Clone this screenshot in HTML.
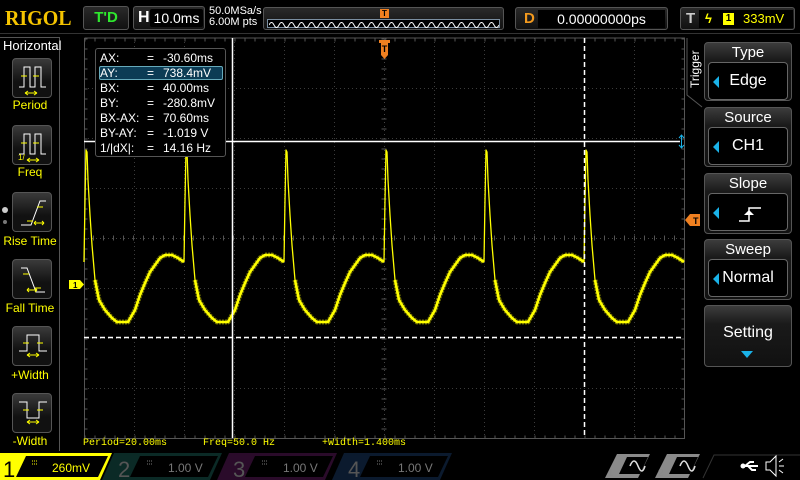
<!DOCTYPE html>
<html><head><meta charset="utf-8"><style>
*{margin:0;padding:0;box-sizing:border-box}
body{width:800px;height:480px;background:#000;overflow:hidden;position:relative;font-family:"Liberation Sans",sans-serif;color:#fff}
.a{position:absolute}
.btn{position:absolute;left:12px;width:40px;height:40px;border:1px solid #555;border-radius:4px;background:linear-gradient(#3a3a3a,#111 60%)}
.lbl{position:absolute;left:0;width:60px;text-align:center;color:#ff0;font-size:12px}
.mo{position:absolute;left:704px;width:88px;border:1px solid #555;border-radius:4px;background:linear-gradient(#3c3c3c,#1a1a1a 30%,#111)}
.mo .t{text-align:center;font-size:15px;color:#fff;height:19px;line-height:19px}
.mo .in{position:absolute;left:3px;right:3px;top:19px;height:38px;border:1px solid #666;border-radius:4px;background:#000;font-size:16px;text-align:center;line-height:36px}
.tri{position:absolute;left:4px;top:13px;width:0;height:0;border-top:6px solid transparent;border-bottom:6px solid transparent;border-right:6px solid #1ab2e8}
.box{position:absolute;border:1px solid #555;border-radius:3px;background:linear-gradient(#2a2a2a,#111)}
.m{position:absolute;top:438px;font-family:'Liberation Mono',monospace;font-size:10px;color:#ff0;white-space:pre}
</style></head><body>

<!-- top bar -->
<div class="a" style="left:5px;top:6px;font-family:'Liberation Serif',serif;font-weight:bold;font-size:21px;color:#f5c400;transform:scaleX(0.95);transform-origin:left">RIGOL</div>
<div class="box" style="left:83px;top:6px;width:46px;height:24px;text-align:center;line-height:22px;color:#2ee82e;font-weight:bold;font-size:15px">T'D</div>
<div class="box" style="left:133px;top:6px;width:72px;height:24px"><span class="a" style="left:4px;top:2px;font-weight:bold;font-size:16px">H</span><div class="a" style="left:16px;top:2px;width:53px;height:18px;background:#000;border-radius:2px;font-size:14px;text-align:center;line-height:18px">10.0ms</div></div>
<div class="a" style="left:209px;top:6px;font-size:11px;line-height:11px">50.0MSa/s<br>6.00M pts</div>
<div class="box" style="left:263px;top:7px;width:241px;height:23px"><div class="a" style="left:3px;top:11px;width:233px;height:9px;border:1px solid #7a8ea0;background:#000"></div>
<svg class="a" style="left:5px;top:12px" width="230" height="8"><path d="M0 5 q2.5 -5 5 0 t5 0 t5 0 t5 0 t5 0 t5 0 t5 0 t5 0 t5 0 t5 0 t5 0 t5 0 t5 0 t5 0 t5 0 t5 0 t5 0 t5 0 t5 0 t5 0 t5 0 t5 0 t5 0 t5 0 t5 0 t5 0 t5 0 t5 0 t5 0 t5 0 t5 0 t5 0 t5 0 t5 0 t5 0 t5 0 t5 0 t5 0 t5 0 t5 0 t5 0 t5 0 t5 0 t5 0 t5 0 t5 0" stroke="#fff" fill="none" stroke-width="1"/></svg>
<div class="a" style="left:116px;top:1px;width:9px;height:9px;background:#f08020;color:#000;font-size:8px;text-align:center;line-height:9px;font-weight:bold">T</div></div>
<div class="box" style="left:515px;top:7px;width:153px;height:23px"><span class="a" style="left:8px;top:2px;font-weight:bold;font-size:15px;color:#f39a1e">D</span><div class="a" style="left:22px;top:2px;width:127px;height:18px;background:#000;font-size:14px;text-align:center;line-height:18px">0.00000000ps</div></div>
<div class="box" style="left:680px;top:7px;width:115px;height:23px"><span class="a" style="left:5px;top:2px;font-weight:bold;font-size:15px;color:#ccc">T</span><div class="a" style="left:18px;top:2px;width:94px;height:18px;background:#000;font-size:13px;line-height:18px;color:#ff0"><span class="a" style="left:6px;top:0;font-weight:bold">&#x03DF;</span><span class="a" style="left:24px;top:3px;width:11px;height:12px;background:#ff0;color:#000;font-size:10px;line-height:12px;text-align:center;font-weight:bold">1</span><span class="a" style="left:44px;top:0">333mV</span></div></div>
<div class="a" style="left:0;top:33px;width:800px;height:1px;background:#333"></div>

<!-- left panel -->
<div class="a" style="left:0;top:37px;width:60px;height:414px;border-top:1px solid #555;border-right:1px solid #555"></div>
<div class="a" style="left:3px;top:38px;font-size:13px">Horizontal</div>
<div class="btn" style="top:58px"><svg width="40" height="40"><path d="M6 28h5V8h6v20h5V8h6v20h5" stroke="#fff" fill="none"/><path d="M8 17h6M20 17h6" stroke="#ff0"/><path d="M12 34h12M12 34l3-2M12 34l3 2M24 34l-3-2M24 34l-3 2" stroke="#ff0"/></svg></div>
<div class="lbl" style="top:98px">Period</div>
<div class="btn" style="top:125px"><svg width="40" height="40"><path d="M6 28h5V8h6v20h5V8h6v20h5" stroke="#fff" fill="none"/><path d="M8 17h6M20 17h6" stroke="#ff0"/><path d="M14 34h12M14 34l3-2M14 34l3 2M26 34l-3-2M26 34l-3 2" stroke="#ff0"/><text x="5" y="34" fill="#ff0" font-size="8">1/</text></svg></div>
<div class="lbl" style="top:165px">Freq</div>
<div class="a" style="left:2px;top:207px;width:6px;height:6px;border-radius:3px;background:#ccc"></div>
<div class="a" style="left:3px;top:220px;width:4px;height:4px;border-radius:2px;background:#777"></div>
<div class="btn" style="top:192px"><svg width="40" height="40"><path d="M8 32h10l9-24h6" stroke="#fff" fill="none"/><path d="M14 28h6M24 14h6M21 30h10M21 30l2-2M21 30l2 2M31 30l-2-2M31 30l-2 2" stroke="#ff0"/></svg></div>
<div class="lbl" style="top:234px;left:-2px;width:64px">Rise Time</div>
<div class="btn" style="top:259px"><svg width="40" height="40"><path d="M8 8h6l9 24h9" stroke="#fff" fill="none"/><path d="M10 14h6M22 28h6M14 30h10M14 30l2-2M14 30l2 2M24 30l-2-2M24 30l-2 2" stroke="#ff0"/></svg></div>
<div class="lbl" style="top:301px;left:-2px;width:64px">Fall Time</div>
<div class="btn" style="top:326px"><svg width="40" height="40"><path d="M6 24h8V8h12v16h8" stroke="#fff" fill="none"/><path d="M10 16h6M24 16h6M14 28h12M14 28l3-2M14 28l3 2M26 28l-3-2M26 28l-3 2" stroke="#ff0"/></svg></div>
<div class="lbl" style="top:368px">+Width</div>
<div class="btn" style="top:393px"><svg width="40" height="40"><path d="M6 8h8v16h12V8h8" stroke="#fff" fill="none"/><path d="M10 16h6M24 16h6M14 28h12M14 28l3-2M14 28l3 2M26 28l-3-2M26 28l-3 2" stroke="#ff0"/></svg></div>
<div class="lbl" style="top:434px">-Width</div>

<!-- grid & waveform -->
<svg class="a" style="left:0;top:0" width="800" height="480">
<g stroke="#3c3c3c" stroke-width="1" stroke-dasharray="1 3">
<path d="M134.5 38V438M184.5 38V438M234.5 38V438M284.5 38V438M334.5 38V438M434.5 38V438M484.5 38V438M534.5 38V438M584.5 38V438M634.5 38V438"/>
<path d="M84 88.5H684M84 138.5H684M84 188.5H684M84 288.5H684M84 338.5H684M84 388.5H684"/>
</g>
<g stroke="#555" stroke-width="1">
<path d="M84.5 38V438.5H684.5V38H84.5" fill="none"/>
<path d="M384.5 38V438M84 238.5H684" stroke-dasharray="1 3" stroke="#444"/>
</g>
<g stroke="#555" stroke-width="3" stroke-dasharray="1 9">
<path d="M84.5 40H684"/>
<path d="M84.5 437H684"/>
<path d="M384 238H684M384 238H84" stroke-width="5"/>
<path d="M86 38.5V438M683 38.5V438"/>
<path d="M384 38.5V438" stroke-width="5"/>
</g>
<!-- waveform -->
<defs>
<path id="p" d="M84 262 L85 200 L86 150 L87 152 L88 180 L90 215 L92 245 L95 280 L99 300 L105 310 L112 318 L117 322 L128 322 L135 310 L140 295 L145 283 L150 272 L155 265 L160 258 L165 255 L172 255 L178 258 L184 262" fill="none"/>
<path id="q" d="M95 280 L99 300 L105 310 L112 318 L117 322 L128 322 L135 310 L140 295 L145 283 L150 272 L155 265 L160 258 L165 255 L172 255 L178 258 L184 262" fill="none"/>
</defs>
<g stroke="#ff0" stroke-linejoin="round">
<g stroke-width="5" stroke="#6a6a00" stroke-dasharray="2 1"><use href="#q"/><use href="#q" x="100"/><use href="#q" x="200"/><use href="#q" x="300"/><use href="#q" x="400"/><use href="#q" x="500"/></g>
<g stroke-width="2.6"><use href="#q"/><use href="#q" x="100"/><use href="#q" x="200"/><use href="#q" x="300"/><use href="#q" x="400"/><use href="#q" x="500"/></g>
<g stroke-width="1.3"><use href="#p"/><use href="#p" x="100"/><use href="#p" x="200"/><use href="#p" x="300"/><use href="#p" x="400"/><use href="#p" x="500"/></g>
</g>
<!-- cursors -->
<path d="M232.5 38V438" stroke="#fff" stroke-width="1.5"/>
<path d="M584.5 38V438" stroke="#fff" stroke-width="1.5" stroke-dasharray="5 3"/>
<path d="M84 141.5H680" stroke="#fff" stroke-width="1.5"/>
<path d="M84 337.5H684" stroke="#fff" stroke-width="1.5" stroke-dasharray="5 3"/>
<path d="M681.5 135v13M679 138l2.5-3 2.5 3M679 145l2.5 3 2.5-3" stroke="#1ab2e8" fill="none"/>
<!-- markers -->
<path d="M379 40h11v3h-2v12l-3.5 4-3.5-4V43h-2z" fill="#f08020"/>
<text x="384.5" y="52" font-size="9" text-anchor="middle" fill="#000" font-weight="bold" font-family="Liberation Sans">T</text>
<path d="M700 214v12h-10l-5-6 5-6z" fill="#f08020"/>
<text x="693" y="224" font-size="9" fill="#000" font-weight="bold" font-family="Liberation Sans">T</text>
<path d="M69 280h11l4 4.5-4 4.5H69z" fill="#ff0"/>
<text x="73" y="288" font-size="8" fill="#000" font-weight="bold" font-family="Liberation Sans">1</text>
<!-- trigger tab -->
<path d="M687 38V95l15 12" stroke="#555" fill="none"/>
<text transform="translate(699,88) rotate(-90)" font-size="12" fill="#fff" font-family="Liberation Sans">Trigger</text>
<!-- bottom right icons -->
<path d="M605 478l12-24h33l-12 24z" fill="#8a8a8a"/><path d="M619 474l8-17h21l-8 17z" fill="#000"/>
<path d="M655 478l12-24h33l-12 24z" fill="#8a8a8a"/><path d="M669 474l8-17h21l-8 17z" fill="#000"/>
<path d="M630 466q4-10 8 0t7 0M680 466q4-10 8 0t7 0" stroke="#ddd" stroke-width="1.6" fill="none"/>
<text x="608" y="476" font-size="10" fill="#888" font-family="Liberation Sans">1</text>
<text x="658" y="476" font-size="10" fill="#888" font-family="Liberation Sans">2</text>
<path d="M703 478l11-23h86" stroke="#333" fill="none"/>
<path d="M742 466h16M745 466l5-4h4M748 466l4 4h4" stroke="#fff" stroke-width="2" fill="none"/><circle cx="743" cy="466" r="2.5" fill="#fff"/>
<path d="M766 462h4l6-6v20l-6-6h-4z" stroke="#fff" fill="none"/><path d="M779 462l4-3M779 466h5M779 470l4 3" stroke="#fff"/>
</svg>

<!-- cursor info -->
<div class="a" style="left:95px;top:48px;width:131px;height:109px;border:1px solid #555;border-radius:3px;background:#000;font-size:12px;line-height:15px;padding:2px 0 0 4px">
<div class="a" style="left:3px;top:17px;width:124px;height:14px;border:1px solid #6ab;border-radius:2px;background:#0c3c55"></div>
<div style="position:relative"><span style="display:inline-block;width:47px">AX:</span><span style="display:inline-block;width:16px">=</span>-30.60ms<br><span style="display:inline-block;width:47px">AY:</span><span style="display:inline-block;width:16px">=</span>738.4mV<br><span style="display:inline-block;width:47px">BX:</span><span style="display:inline-block;width:16px">=</span>40.00ms<br><span style="display:inline-block;width:47px">BY:</span><span style="display:inline-block;width:16px">=</span>-280.8mV<br><span style="display:inline-block;width:47px">BX-AX:</span><span style="display:inline-block;width:16px">=</span>70.60ms<br><span style="display:inline-block;width:47px">BY-AY:</span><span style="display:inline-block;width:16px">=</span>-1.019 V<br><span style="display:inline-block;width:47px">1/|dX|:</span><span style="display:inline-block;width:16px">=</span>14.16 Hz</div>
</div>

<!-- right menu -->
<div class="mo" style="top:42px;height:59px"><div class="t">Type</div><div class="in"><div class="tri"></div>Edge</div></div>
<div class="mo" style="top:107px;height:60px"><div class="t">Source</div><div class="in"><div class="tri"></div>CH1</div></div>
<div class="mo" style="top:173px;height:61px"><div class="t">Slope</div><div class="in"><div class="tri"></div><svg class="a" style="left:30px;top:8px" width="24" height="22"><path d="M0 19h10V6h12" stroke="#fff" fill="none" stroke-width="1.5"/><path d="M5 13l5-5 5 5z" fill="#fff"/></svg></div></div>
<div class="mo" style="top:239px;height:61px"><div class="t">Sweep</div><div class="in"><div class="tri"></div>Normal</div></div>
<div class="mo" style="top:305px;height:62px"><div class="t" style="margin-top:17px;font-size:16px">Setting</div><div class="a" style="left:36px;top:45px;border-left:6px solid transparent;border-right:6px solid transparent;border-top:7px solid #1ab2e8"></div></div>

<!-- measurements -->
<div class="m" style="left:83px">Period=20.00ms</div>
<div class="m" style="left:203px">Freq=50.0 Hz</div>
<div class="m" style="left:322px">+Width=1.400ms</div>

<!-- channel bar -->
<svg class="a" style="left:0;top:453px" width="470" height="27">
<path d="M0 0h112l-12 27H0z" fill="#ff0"/>
<path d="M26 3h82l-10 21H16z" fill="#000"/>
<text x="3" y="24" font-size="22" fill="#000" font-family="Liberation Sans">1</text>
<path d="M114 0h108l-12 27H102z" fill="#0b2a26"/><path d="M140 3h78l-10 21H130z" fill="#000"/>
<path d="M229 0h108l-12 27H217z" fill="#2a0b2a"/><path d="M255 3h78l-10 21H245z" fill="#000"/>
<path d="M344 0h108l-12 27H332z" fill="#0b1a2e"/><path d="M370 3h78l-10 21H360z" fill="#000"/>
<text x="118" y="24" font-size="22" fill="#555" font-family="Liberation Sans">2</text>
<text x="233" y="24" font-size="22" fill="#555" font-family="Liberation Sans">3</text>
<text x="348" y="24" font-size="22" fill="#555" font-family="Liberation Sans">4</text>
<g font-family="Liberation Sans" font-size="12">
<text x="52" y="19" fill="#ff0">260mV</text>
<text x="168" y="19" fill="#777">1.00 V</text>
<text x="283" y="19" fill="#777">1.00 V</text>
<text x="398" y="19" fill="#777">1.00 V</text>
</g>
<path d="M32 8h6M32 11h6" stroke="#ff0" stroke-dasharray="1 1"/>
<path d="M147 8h6M147 11h6M262 8h6M262 11h6M377 8h6M377 11h6" stroke="#777" stroke-dasharray="1 1"/>
</svg>
</body></html>
